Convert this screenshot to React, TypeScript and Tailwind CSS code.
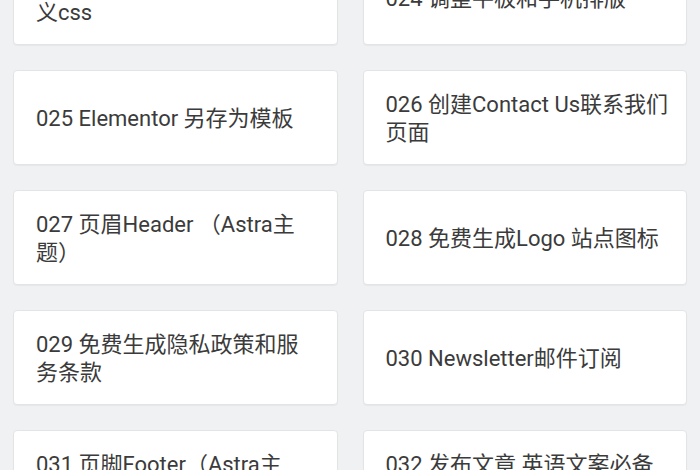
const lessons = [
  '023 Elementor页面添加自定\n义css',
  '024 调整平板和手机排版',
  '025 Elementor 另存为模板',
  '026 创建Contact Us联系我们\n页面',
  '027 页眉Header （Astra主\n题）',
  '028 免费生成Logo 站点图标',
  '029 免费生成隐私政策和服\n务条款',
  '030 Newsletter邮件订阅',
  '031 页脚Footer（Astra主\n题）',
  '032 发布文章 英语文案必备\n工具',
];

function LessonCard({ title }: { title: string }) {
  return (
    <div className="flex h-[95px] items-center rounded-[4px] border border-[#e3e4e6] bg-white pl-[22px] pr-[8px] pt-[3px] shadow-[0_1px_1px_rgba(0,0,0,0.04)]">
      <p className="whitespace-pre-line text-[22px] leading-[28px] text-[#3b3b3b]">{title}</p>
    </div>
  );
}

export default function App() {
  return (
    <div
      className="h-[470px] w-[700px] overflow-hidden bg-[#f0f1f3]"
      style={{ fontFamily: 'Roboto, "Noto Sans CJK SC", sans-serif' }}
    >
      <div className="-mt-[50px] grid grid-cols-2 gap-x-[25px] gap-y-[25px] px-[13px]">
        {lessons.map((title) => (
          <LessonCard key={title} title={title} />
        ))}
      </div>
    </div>
  );
}
